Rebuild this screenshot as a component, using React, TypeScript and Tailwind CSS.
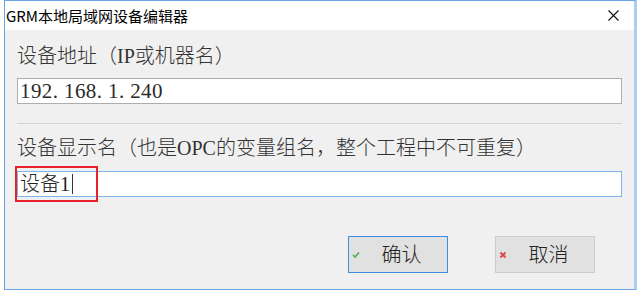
import React from "react";

const serifCjk = "font-['Liberation_Serif','Noto_Sans_CJK_SC',serif]";

function CheckIcon() {
  return (
    <svg width="8" height="7" viewBox="0 0 8 7" className="shrink-0">
      <path d="M1 4 L3 6 L7 1.5" fill="none" stroke="#4caf50" strokeWidth="1.6" />
    </svg>
  );
}

function CrossIcon() {
  return (
    <svg width="8" height="8" viewBox="0 0 8 8" className="shrink-0">
      <path d="M1.5 1.5 L6.5 6.5 M6.5 1.5 L1.5 6.5" fill="none" stroke="#e0474c" strokeWidth="2" />
    </svg>
  );
}

export default function App() {
  return (
    <div className="w-[637px] h-[293px] bg-white overflow-hidden">
      <div className="ml-[4px] w-[633px] h-[290px] flex flex-col border-l border-t border-b border-[#6aa6e4] border-r-[3px] border-r-[#a9cff5]">
        {/* Title bar */}
        <div className="h-[29px] bg-white flex items-center pl-[1px] pr-[15px] shrink-0">
          <span className="font-['Noto_Sans_CJK_SC',sans-serif] text-[15px] leading-none text-black">
            GRM本地局域网设备编辑器
          </span>
          <div className="flex-1" />
          <svg width="11" height="11" viewBox="0 0 11 11">
            <path d="M0.5 0.5 L10.5 10.5 M10.5 0.5 L0.5 10.5" stroke="#111" strokeWidth="1.1" />
          </svg>
        </div>
        {/* Body */}
        <div className={`flex-1 bg-[#f0f0f0] px-[12px] flex flex-col text-[#333] ${serifCjk}`}>
          <div className="mt-[14px] h-[24px] leading-[24px] text-[20px] font-light">
            设备地址（IP或机器名）
          </div>
          <div className="mt-[10px] h-[26px] bg-white border border-[#adadad] flex items-center pl-[2px] text-[21px] text-[#2a2a2a] leading-none tracking-[0.4px]">
            192. 168. 1. 240
          </div>
          <div className="mt-[19px] h-px bg-[#d4d4d4]" />
          <div className="mt-[12px] h-[24px] leading-[24px] text-[20px] font-light whitespace-nowrap">
            设备显示名（也是OPC的变量组名，整个工程中不可重复）
          </div>
          <div className="relative mt-[11px] h-[26px] bg-white border border-[#7eb4ea] flex items-center pl-[2px] text-[20px] text-[#222] leading-none">
            <span className="font-light">设备1</span>
            <span className="ml-[2px] w-px h-[20px] bg-[#333]" />
            <div className="absolute left-[-3px] top-[-6px] w-[83px] h-[36px] border-2 border-[#e8222b]" />
          </div>
          <div className="mt-[39px] flex justify-end gap-[47px] mr-[27px]">
            <button className="w-[100px] h-[37px] bg-[#e1e1e1] border border-[#3d8ee0] flex items-center pl-[3px] text-[20px] text-[#222] leading-none">
              <CheckIcon />
              <span className="flex-1 text-center pr-[4px] font-light">确认</span>
            </button>
            <button className="w-[100px] h-[37px] bg-[#e1e1e1] border border-[#cccccc] flex items-center pl-[3px] text-[20px] text-[#222] leading-none">
              <CrossIcon />
              <span className="flex-1 text-center pr-[4px] font-light">取消</span>
            </button>
          </div>
        </div>
      </div>
    </div>
  );
}
